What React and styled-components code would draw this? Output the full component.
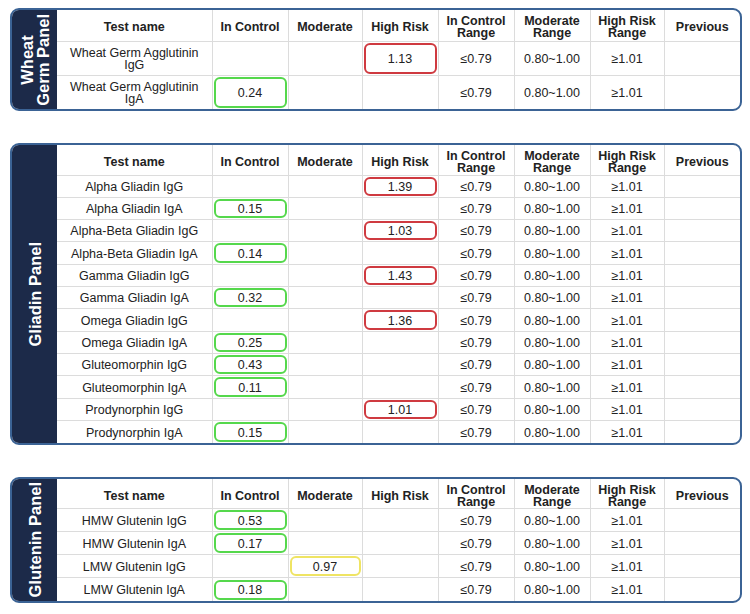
import React from 'react';
import styled, { createGlobalStyle } from 'styled-components';

const Global = createGlobalStyle`
  html, body { margin: 0; padding: 0; background: #ffffff; }
  body { font-family: "Liberation Sans", Arial, sans-serif; color: #222; }
`;

const Page = styled.div`
  display: flex;
  flex-direction: column;
  gap: 32px;
  padding: 8px 0 0 10px;
  width: 732px;
`;

const Panel = styled.section`
  display: flex;
  border: 2px solid #3b6395;
  border-radius: 9px;
  overflow: hidden;
  background: #fff;
`;

const Side = styled.div`
  width: 45px;
  flex: 0 0 45px;
  background: #1c2a49;
  display: flex;
  align-items: center;
  justify-content: center;
`;

const SideLabel = styled.div`
  writing-mode: vertical-rl;
  transform: rotate(180deg);
  color: #ffffff;
  font-weight: 700;
  font-size: 16.5px;
  line-height: 16px;
  text-align: center;
  white-space: nowrap;
`;

const Table = styled.table`
  border-collapse: collapse;
  table-layout: fixed;
  width: 683px;
  font-size: 12.5px;
`;

const HeadRow = styled.tr`
  height: ${p => p.$h}px;
`;

const Row = styled.tr`
  height: ${p => p.$h}px;
`;

const Th = styled.th`
  font-weight: 700;
  line-height: 12px;
  text-align: center;
  vertical-align: middle;
  padding: 4px 2px 0;
  border-left: 1px solid #dcdcdc;
  border-bottom: 1px solid #dcdcdc;
  &:first-child { border-left: none; }
`;

const Td = styled.td`
  text-align: center;
  vertical-align: middle;
  line-height: 12px;
  padding: ${p => (p.$box ? '1px 1px' : '1px 4px 0')};
  border-left: 1px solid #dcdcdc;
  border-bottom: 1px solid #dcdcdc;
  &:first-child { border-left: none; }
  tr:last-child > & { border-bottom: none; }
`;

const colors = {
  control: '#55d84c',
  moderate: '#efe463',
  high: '#cf3a40',
};

const Box = styled.div`
  box-sizing: border-box;
  height: ${p => p.$h}px;
  border: 2px solid ${p => colors[p.$kind]};
  border-radius: 6px;
  display: flex;
  align-items: center;
  justify-content: center;
  padding-top: 1px;
`;

const widths = [155, 76, 74, 76, 76, 76, 74, 76];
const headers = ['Test name', 'In Control', 'Moderate', 'High Risk', 'In Control Range', 'Moderate Range', 'High Risk Range', 'Previous'];
const kindCol = { control: 1, moderate: 2, high: 3 };

const panels = [
  {
    label: ['Wheat', 'Germ Panel'],
    headH: 31,
    rowH: 34,
    rows: [
      ['Wheat Germ Agglutinin IgG', 'high', '1.13'],
      ['Wheat Germ Agglutinin IgA', 'control', '0.24'],
    ],
  },
  {
    label: ['Gliadin Panel'],
    headH: 30,
    rowH: 22.33,
    rows: [
      ['Alpha Gliadin IgG', 'high', '1.39'],
      ['Alpha Gliadin IgA', 'control', '0.15'],
      ['Alpha-Beta Gliadin IgG', 'high', '1.03'],
      ['Alpha-Beta Gliadin IgA', 'control', '0.14'],
      ['Gamma Gliadin IgG', 'high', '1.43'],
      ['Gamma Gliadin IgA', 'control', '0.32'],
      ['Omega Gliadin IgG', 'high', '1.36'],
      ['Omega Gliadin IgA', 'control', '0.25'],
      ['Gluteomorphin IgG', 'control', '0.43'],
      ['Gluteomorphin IgA', 'control', '0.11'],
      ['Prodynorphin IgG', 'high', '1.01'],
      ['Prodynorphin IgA', 'control', '0.15'],
    ],
  },
  {
    label: ['Glutenin Panel'],
    headH: 30,
    rowH: 23,
    rows: [
      ['HMW Glutenin IgG', 'control', '0.53'],
      ['HMW Glutenin IgA', 'control', '0.17'],
      ['LMW Glutenin IgG', 'moderate', '0.97'],
      ['LMW Glutenin IgA', 'control', '0.18'],
    ],
  },
];

function ResultRow({ row, h }) {
  const [name, kind, value] = row;
  const col = kindCol[kind];
  const cells = [];
  for (let i = 1; i <= 3; i++) {
    if (i === col) {
      cells.push(
        <Td key={i} $box>
          <Box $kind={kind} $h={h - 3}>{value}</Box>
        </Td>
      );
    } else {
      cells.push(<Td key={i} />);
    }
  }
  return (
    <Row $h={h}>
      <Td>{name}</Td>
      {cells}
      <Td>≤0.79</Td>
      <Td>0.80~1.00</Td>
      <Td>≥1.01</Td>
      <Td />
    </Row>
  );
}

export default function App() {
  return (
    <>
      <Global />
      <Page>
        {panels.map((p, idx) => (
          <Panel key={idx}>
            <Side>
              <SideLabel>
                {p.label.map((l, i) => (
                  <div key={i}>{l}</div>
                ))}
              </SideLabel>
            </Side>
            <Table>
              <colgroup>
                {widths.map((w, i) => (
                  <col key={i} style={{ width: w }} />
                ))}
              </colgroup>
              <thead>
                <HeadRow $h={p.headH}>
                  {headers.map(hd => (
                    <Th key={hd}>{hd}</Th>
                  ))}
                </HeadRow>
              </thead>
              <tbody>
                {p.rows.map((r, i) => (
                  <ResultRow key={i} row={r} h={p.rowH} />
                ))}
              </tbody>
            </Table>
          </Panel>
        ))}
      </Page>
    </>
  );
}
